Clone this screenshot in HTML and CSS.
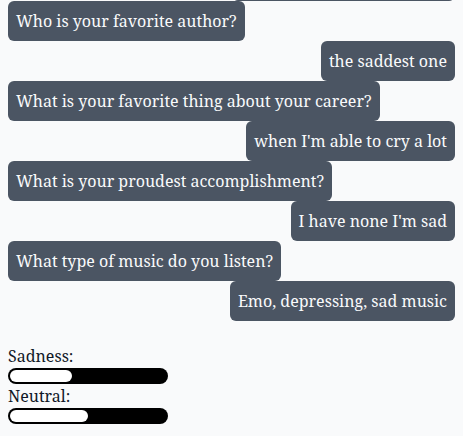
FILE: index.html
```html
<!DOCTYPE html>
<html>
<head>
<meta charset="utf-8">
<link rel="stylesheet" href="styles.css">
</head>
<body>
<div class="chat">
  <div class="msg user prev"></div>
  <div class="msg bot">Who is your favorite author?</div>
  <div class="msg user">the saddest one</div>
  <div class="msg bot">What is your favorite thing about your career?</div>
  <div class="msg user">when I'm able to cry a lot</div>
  <div class="msg bot">What is your proudest accomplishment?</div>
  <div class="msg user">I have none I'm sad</div>
  <div class="msg bot">What type of music do you listen?</div>
  <div class="msg user">Emo, depressing, sad music</div>
</div>
<div class="stats">
  <div class="label">Sadness:</div>
  <div class="bar"><div class="fill" style="width: 40%"></div></div>
  <div class="label">Neutral:</div>
  <div class="bar"><div class="fill" style="width: 50%"></div></div>
</div>
</body>
</html>
```
FILE: styles.css
```css
html, body {
  background: #f9fafb;
}
body {
  margin: 0 8px 8px 8px;
  font-family: "Noto Serif", "DejaVu Serif", serif;
  font-size: 16px;
  line-height: 24px;
  color: #111827;
}
.chat {
  height: 321px;
  overflow: hidden;
  display: flex;
  flex-direction: column;
  justify-content: flex-end;
  align-items: flex-start;
}
.msg {
  flex: none;
  background: #4b5563;
  color: #f9fafb;
  padding: 8px;
  border-radius: 6px;
}
.msg.user {
  align-self: flex-end;
}
.msg.prev {
  width: 207px;
  height: 24px;
}
.stats {
  margin-top: 23px;
  width: 160px;
}
.label {
  height: 24px;
}
.bar {
  height: 16px;
  background: #000;
  border-radius: 8px;
  padding: 2px;
  box-sizing: border-box;
}
.fill {
  height: 100%;
  background: #fff;
  border-radius: 6px;
}
```
